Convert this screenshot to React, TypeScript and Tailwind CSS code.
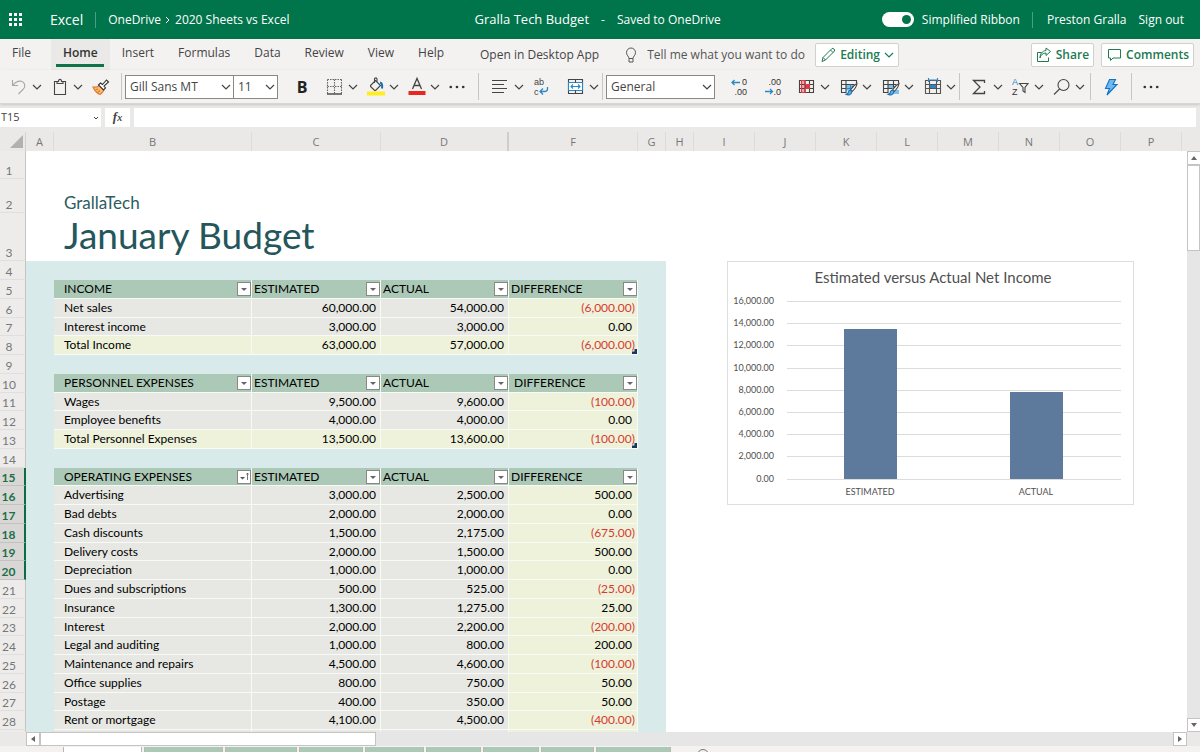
import type { ReactNode } from 'react';
import clsx from 'clsx';

const UI_FONT = "font-['Open_Sans','Noto_Sans',sans-serif]";
const SHEET_FONT = "font-['Lato','Open_Sans',sans-serif]";

type SheetRow =
  | { kind: 'blank' }
  | { kind: 'header'; cells: string[]; sorted?: boolean; indent?: boolean }
  | { kind: 'data' | 'total'; cells: string[]; corner?: boolean };

const ROWS: SheetRow[] = [
  { kind: 'blank' },
  { kind: 'header', cells: ['INCOME', 'ESTIMATED', 'ACTUAL', 'DIFFERENCE'] },
  { kind: 'data', cells: ['Net sales', '60,000.00', '54,000.00', '(6,000.00)'] },
  { kind: 'data', cells: ['Interest income', '3,000.00', '3,000.00', '0.00'] },
  { kind: 'total', cells: ['Total Income', '63,000.00', '57,000.00', '(6,000.00)'], corner: true },
  { kind: 'blank' },
  { kind: 'header', cells: ['PERSONNEL EXPENSES', 'ESTIMATED', 'ACTUAL', 'DIFFERENCE'], indent: true },
  { kind: 'data', cells: ['Wages', '9,500.00', '9,600.00', '(100.00)'] },
  { kind: 'data', cells: ['Employee benefits', '4,000.00', '4,000.00', '0.00'] },
  { kind: 'total', cells: ['Total Personnel Expenses', '13,500.00', '13,600.00', '(100.00)'], corner: true },
  { kind: 'blank' },
  { kind: 'header', cells: ['OPERATING EXPENSES', 'ESTIMATED', 'ACTUAL', 'DIFFERENCE'], sorted: true },
  { kind: 'data', cells: ['Advertising', '3,000.00', '2,500.00', '500.00'] },
  { kind: 'data', cells: ['Bad debts', '2,000.00', '2,000.00', '0.00'] },
  { kind: 'data', cells: ['Cash discounts', '1,500.00', '2,175.00', '(675.00)'] },
  { kind: 'data', cells: ['Delivery costs', '2,000.00', '1,500.00', '500.00'] },
  { kind: 'data', cells: ['Depreciation', '1,000.00', '1,000.00', '0.00'] },
  { kind: 'data', cells: ['Dues and subscriptions', '500.00', '525.00', '(25.00)'] },
  { kind: 'data', cells: ['Insurance', '1,300.00', '1,275.00', '25.00'] },
  { kind: 'data', cells: ['Interest', '2,000.00', '2,200.00', '(200.00)'] },
  { kind: 'data', cells: ['Legal and auditing', '1,000.00', '800.00', '200.00'] },
  { kind: 'data', cells: ['Maintenance and repairs', '4,500.00', '4,600.00', '(100.00)'] },
  { kind: 'data', cells: ['Office supplies', '800.00', '750.00', '50.00'] },
  { kind: 'data', cells: ['Postage', '400.00', '350.00', '50.00'] },
  { kind: 'data', cells: ['Rent or mortgage', '4,100.00', '4,500.00', '(400.00)'] },
  { kind: 'data', cells: ['', '', '', ''] },
];

const COLUMNS = [
  { name: 'A', width: 'w-[28px]' },
  { name: 'B', width: 'w-[198px]' },
  { name: 'C', width: 'w-[129px]' },
  { name: 'D', width: 'w-[128px]' },
  { name: 'F', width: 'w-[129px]' },
  { name: 'G', width: 'w-[28px]' },
  { name: 'H', width: 'w-[28px]' },
  { name: 'I', width: 'w-[61px]' },
  { name: 'J', width: 'w-[61px]' },
  { name: 'K', width: 'w-[61px]' },
  { name: 'L', width: 'w-[61px]' },
  { name: 'M', width: 'w-[61px]' },
  { name: 'N', width: 'w-[61px]' },
  { name: 'O', width: 'w-[61px]' },
  { name: 'P', width: 'w-[61px]' },
];

const MENU = ['File', 'Home', 'Insert', 'Formulas', 'Data', 'Review', 'View', 'Help'];

/* ---------- icons ---------- */

function Svg({ children, className = 'w-[18px] h-[18px]' }: { children: ReactNode; className?: string }) {
  return (
    <svg viewBox="0 0 18 18" className={clsx('shrink-0 overflow-visible', className)} fill="none" stroke="#444" strokeWidth="1.1">
      {children}
    </svg>
  );
}

function Chevron({ className = 'text-[#444]' }: { className?: string }) {
  return (
    <svg viewBox="0 0 10 10" className={clsx('w-2.5 h-2.5 shrink-0 pointer-events-none', className)} fill="none" stroke="currentColor" strokeWidth="1.2">
      <path d="M1 3l4 4 4-4" />
    </svg>
  );
}

const UndoIcon = () => (
  <Svg>
    <path d="M2.500 2v5.500H8M2.500 7.500c3-3.500 6-5 9-4.200s4.500 4.500 2 7.700L8.500 16" stroke="#a8a6a4" />
  </Svg>
);

const PasteIcon = () => (
  <Svg>
    <path d="M6 3.500H3.500v13h11v-13H12M6 5.500v-2h1.500c0-3 3-3 3 0H12v2z" />
  </Svg>
);

const BrushIcon = () => (
  <Svg>
    <path d="M1 9c3 .5 5-.3 6.500-1.500l4.500 4.500c-1 2-2.500 3.500-4 4.500-3-1-5.500-4-7-7.500z" fill="#f9b97a" stroke="#e07b1f" />
    <path d="M3.500 12l2.500-1M5.500 14.500l2.500-2" stroke="#e07b1f" />
    <path d="M6.500 7l2-2 2 1.500 4-4.500 2 2L12 8l1.500 2-2 2z" fill="#fff" stroke="#333" />
  </Svg>
);

const BordersIcon = () => (
  <Svg>
    <path d="M1.500 1.500h14M1.500 1.500v14M15.500 1.500v14M8.500 1.500v14M1.500 8.500h14" strokeDasharray="1.500 1" stroke="#666" />
    <path d="M1 16h15" strokeWidth="1.400" />
  </Svg>
);

const FillIcon = () => (
  <Svg>
    <rect x="0" y="13.500" width="18" height="4" fill="#ffee1f" stroke="none" />
    <path d="M3.500 7.500l5-5 5 5-4.500 4.500c-.6.500-1.200.500-1.800 0L3.500 8.500zM7.500 5V1c0-1.500 2.500-1.500 2.500 0v4" />
    <path d="M13 4.500c2 .5 2.500 3 2 6" stroke="#1271b5" strokeWidth="2" />
  </Svg>
);

const FontColorIcon = () => (
  <Svg>
    <path d="M4.500 11L9 .500 13.500 11M6 7.500h6" strokeWidth="1.300" />
    <rect x="0.500" y="13" width="17" height="4" fill="#e8281e" stroke="none" />
  </Svg>
);

const MoreIcon = () => (
  <Svg className="w-4 h-4">
    <g fill="#333" stroke="none">
      <circle cx="2" cy="9" r="1.500" />
      <circle cx="9" cy="9" r="1.500" />
      <circle cx="16" cy="9" r="1.500" />
    </g>
  </Svg>
);

const AlignIcon = () => (
  <Svg>
    <path d="M0 2.500h15M0 6.500h12M0 10.500h15M0 14.500h12" />
  </Svg>
);

const WrapIcon = () => (
  <Svg>
    <g fill="#444" stroke="none" fontSize="9" fontFamily="Liberation Sans">
      <text x="1" y="7">ab</text>
      <text x="1" y="17">c</text>
    </g>
    <path d="M14.500 9v2c0 2-1 2.500-3 2.500H7.500M10 10.500l-3 3 3 3" stroke="#2b88c4" strokeWidth="1.300" />
  </Svg>
);

const MergeIcon = () => (
  <Svg>
    <path d="M1.500 1.500h14v14h-14z" />
    <path d="M1.500 4.500h14v8h-14z" stroke="#2b88c4" fill="#fff" />
    <path d="M8.500 1.500v3M8.500 12.500v3" />
    <path d="M4 8.500h9M6 6.500l-2 2 2 2M11 6.500l2 2-2 2" stroke="#2b88c4" />
  </Svg>
);

function DecimalIcon({ top, bottom, left }: { top: string; bottom: string; left?: boolean }) {
  return (
    <Svg>
      <g fill="#333" stroke="none" fontSize="9" fontFamily="Liberation Sans" textAnchor="end">
        <text x="17" y="7">{top}</text>
        <text x="17" y="17">{bottom}</text>
      </g>
      {left
        ? <path d="M10 4.500H2M4.500 2L2 4.500 4.500 7" stroke="#2b88c4" strokeWidth="1.300" />
        : <path d="M1 13.500h7.500M6 11l2.500 2.500L6 16" stroke="#2b88c4" strokeWidth="1.300" />}
    </Svg>
  );
}

const ConditionalIcon = () => (
  <Svg>
    <path d="M3.500 2.500h4v4h4v4h-4v4h-4z" fill="#f5a3a8" stroke="none" />
    <path d="M7 6.500h4.500v4H7z" fill="#e03a45" stroke="none" />
    <path d="M1.500 2.500h14v12h-14zM1.500 6.500h14M1.500 10.500h14M7 2.500v12M11.500 2.500v12" />
    <path d="M3.500 2.500H7v4h4.500v4H7v4H3.500z" stroke="#e03a45" />
  </Svg>
);

const BrushOverlay = () => (
  <>
    <path d="M17 5.500c-2 1-5 4-6.500 6.500l1.500 1.500c2.500-2 4.500-5 5-8z" fill="#fff" />
    <path d="M10.500 12c-2 0-2 1.500-2.500 3-.3.800-1 1-2 1.200 2 1.300 5.500.8 6-2.700z" fill="#5bb0e6" stroke="#1f6fae" />
  </>
);

const TableFormatIcon = () => (
  <Svg>
    <path d="M6 6.500h7v6H6z" fill="#7cc0ee" stroke="none" />
    <path d="M16.500 5V2.500h-15v12h5M1.500 6.500h13M1.500 10.500h4M6 2.500v12" />
    <path d="M6 10.500h5M10.500 6.500v5" stroke="#2b88c4" />
    <BrushOverlay />
  </Svg>
);

const CellStyleIcon = () => (
  <Svg>
    <path d="M6 6.500h6v4H6zM13 12h4v4h-6z" fill="#7cc0ee" stroke="none" />
    <path d="M16.500 5V2.500h-15v12h5M1.500 6.500h13M1.500 10.500h9M6 2.500v12M11.500 2.500v7" />
    <BrushOverlay />
  </Svg>
);

const InsertCellsIcon = () => (
  <Svg>
    <path d="M6 6.500h6v4H6z" fill="#2b88c4" stroke="none" />
    <path d="M1.500 2.500h15v13h-15zM1.500 6.500h15M1.500 10.500h15M5.500 2.500v13M12.500 2.500v13" stroke="#555" />
    <path d="M4.500 0v4M5 2h8M13.500 0v4" stroke="#2b88c4" />
  </Svg>
);

const SumIcon = () => (
  <Svg>
    <path d="M13.500 5V2.500h-11L9 9l-6.500 6.500h11V13" strokeWidth="1.300" />
  </Svg>
);

const SortIcon = () => (
  <Svg>
    <g stroke="none" fontSize="9" fontFamily="Liberation Sans">
      <text x="0" y="7" fill="#2b88c4">A</text>
      <text x="0" y="17" fill="#333">Z</text>
    </g>
    <path d="M7.500 5.500h8.500L13 9.500v5l-2-1.500V9.500z" />
  </Svg>
);

const FindIcon = () => (
  <Svg>
    <circle cx="10.500" cy="7" r="5.500" />
    <path d="M6.500 11L1 16.500" />
  </Svg>
);

const BoltIcon = () => (
  <Svg>
    <path d="M7.500 1.500h6L11 6.500h4L5 17l2.500-6.500H3.500z" fill="#6db8f0" stroke="#1272c4" />
  </Svg>
);

/* ---------- ribbon ---------- */

function Tool({ label, icon, menu }: { label: string; icon: ReactNode; menu?: boolean }) {
  return (
    <button aria-label={label} className="flex items-center gap-1 h-7 shrink-0">
      {icon}
      {menu && <Chevron />}
    </button>
  );
}

const Divider = ({ className }: { className: string }) => (
  <span className={clsx('w-px h-[27px] bg-[#c8c6c4] shrink-0', className)} />
);

function Combo({ label, value, className }: { label: string; value: string; className: string }) {
  return (
    <label className={clsx('relative flex items-center h-6 border border-[#8a8886] bg-white shrink-0', className)}>
      <select aria-label={label} className="appearance-none w-full h-full pl-1 text-[12px] text-[#444] bg-transparent outline-none">
        <option>{value}</option>
      </select>
      <Chevron className="absolute right-[2px] text-[#444]" />
    </label>
  );
}

function TopBar() {
  return (
    <header className="flex items-center h-[39px] bg-[#00744a] text-white text-[12px] font-medium shrink-0">
      <button aria-label="App launcher" className="ml-[9px] grid grid-cols-3 gap-[2px]">
        {Array.from({ length: 9 }, (_, i) => <span key={i} className="w-[3px] h-[3px] bg-white" />)}
      </button>
      <span className="ml-7 text-[14px]">Excel</span>
      <span className="ml-3 w-px h-4 bg-[#4d9d80]" />
      <nav className="ml-3 flex items-center gap-[3px]">
        <a href="#onedrive">OneDrive</a>
        <svg viewBox="0 0 8 8" className="w-2 h-2" fill="none" stroke="white"><path d="M2 1l3 3-3 3" /></svg>
        <a href="#folder">2020 Sheets vs Excel</a>
      </nav>
      <div className="flex-1 flex items-center justify-center pl-6">
        <span className="text-[13px]">Gralla Tech Budget</span>
        <span className="mx-3">-</span>
        <span>Saved to OneDrive</span>
      </div>
      <button role="switch" aria-checked="true" aria-labelledby="ribbon-switch" className="flex justify-end items-center w-8 h-[15px] rounded-full bg-white pr-[3px]">
        <span className="w-[9px] h-[9px] rounded-full bg-[#00744a]" />
      </button>
      <span id="ribbon-switch" className="ml-2">Simplified Ribbon</span>
      <span className="ml-3 w-px h-4 bg-[#4d9d80]" />
      <button className="ml-3.5">Preston Gralla</button>
      <a href="#signout" className="ml-3 mr-4">Sign out</a>
    </header>
  );
}

const PILL = 'flex items-center gap-1 h-6 px-1 border border-[#d2d0ce] rounded-xs bg-white font-semibold text-[#217a50]';

function MenuRow() {
  return (
    <div className="flex items-center h-[31px] text-[12px] text-[#444] shrink-0">
      <nav className="flex self-stretch">
        {MENU.map(item => (
          <button
            key={item}
            className={clsx(
              'flex flex-col items-center px-3 pt-[5px]',
              item === 'Home' ? 'ml-2 bg-[#eae9e8] font-semibold text-[#333]' : 'font-normal',
            )}
          >
            {item}
            {item === 'Home' && <span className="-mx-2 mt-[2px] w-12 h-[3px] bg-[#0f7348]" />}
          </button>
        ))}
      </nav>
      <button className="ml-6">Open in Desktop App</button>
      <label className="ml-6 flex items-center gap-2">
        <svg viewBox="0 0 16 16" className="w-4 h-4" fill="none" stroke="#555">
          <path d="M6 11.500c0-2-2.500-3-2.500-6a4.500 4.500 0 0 1 9 0c0 3-2.500 4-2.500 6zM6 11.500v3.500h4v-3.500" />
        </svg>
        <input placeholder="Tell me what you want to do" className="w-[160px] bg-transparent outline-none placeholder:text-[#555]" />
      </label>
      <button className={clsx('ml-2', PILL)}>
        <svg viewBox="0 0 16 16" className="w-4 h-4" fill="none" stroke="currentColor">
          <path d="M2 14.500l1-4L12 1.500c1-.8 3.300 1.300 2.500 2.500l-9 9zM3 10.500l2.500 2.500M10.500 3l2.500 2.500" />
        </svg>
        Editing
        <Chevron className="text-[#217a50]" />
      </button>
      <div className="ml-auto mr-1.5 flex gap-[7px]">
        <button className={PILL}>
          <svg viewBox="0 0 16 16" className="w-4 h-4" fill="none" stroke="currentColor">
            <path d="M5.500 5.500h-4v9h11v-4M4 11c.5-3 3-5 6-5V8.500l4.500-4L10 1v2.500C6 4 4 7 4 11z" />
          </svg>
          Share
        </button>
        <button className={PILL}>
          <svg viewBox="0 0 16 16" className="w-4 h-4" fill="none" stroke="currentColor">
            <path d="M2.500 2.500h12v8.500H7l-2.500 2.500V11h-2z" />
          </svg>
          Comments
        </button>
      </div>
    </div>
  );
}

function Toolbar() {
  return (
    <div className="flex items-center h-[34px] gap-[9px] pl-2.5 border-b border-[#d8d6d4] shadow-sm shrink-0 relative">
      <Tool label="Undo" icon={<UndoIcon />} menu />
      <Tool label="Paste" icon={<PasteIcon />} menu />
      <Tool label="Format painter" icon={<BrushIcon />} />
      <Divider className="ml-0.5 -mr-1.5" />
      <div className="flex shrink-0">
        <Combo label="Font" value="Gill Sans MT" className="w-[109px]" />
        <Combo label="Font size" value="11" className="w-[45px] -ml-px" />
      </div>
      <button aria-label="Bold" className="mx-1.5 w-[18px] text-[16px] leading-5 font-bold text-[#222]">B</button>
      <Tool label="Borders" icon={<BordersIcon />} menu />
      <Tool label="Fill color" icon={<FillIcon />} menu />
      <Tool label="Font color" icon={<FontColorIcon />} menu />
      <Tool label="More font options" icon={<MoreIcon />} />
      <Divider className="mx-1" />
      <Tool label="Alignment" icon={<AlignIcon />} menu />
      <div className="flex gap-4">
        <Tool label="Wrap text" icon={<WrapIcon />} />
        <Tool label="Merge" icon={<MergeIcon />} menu />
      </div>
      <Divider className="-mx-1.5" />
      <Combo label="Number format" value="General" className="w-[109px]" />
      <div className="flex gap-4 ml-1.5">
        <Tool label="Increase decimal" icon={<DecimalIcon top="0" bottom=".00" left />} />
        <Tool label="Decrease decimal" icon={<DecimalIcon top=".00" bottom=".0" />} />
        <div className="flex gap-2.5">
          <Tool label="Conditional formatting" icon={<ConditionalIcon />} menu />
          <Tool label="Format as table" icon={<TableFormatIcon />} menu />
          <Tool label="Cell styles" icon={<CellStyleIcon />} menu />
          <Tool label="Insert cells" icon={<InsertCellsIcon />} menu />
        </div>
      </div>
      <Divider className="-ml-1.5 mr-0.5" />
      <Tool label="AutoSum" icon={<SumIcon />} menu />
      <Tool label="Sort and filter" icon={<SortIcon />} menu />
      <Tool label="Find" icon={<FindIcon />} menu />
      <Divider className="-ml-1 mr-0.5" />
      <Tool label="Ideas" icon={<BoltIcon />} />
      <Divider className="mx-0.5" />
      <Tool label="More commands" icon={<MoreIcon />} />
    </div>
  );
}

function FormulaBar() {
  return (
    <div className="flex gap-1 mt-1 h-[19px] pr-1 shrink-0">
      <label className="relative flex items-center w-[101px] bg-white">
        <input aria-label="Name box" defaultValue="T15" className="w-full pl-px text-[11px] text-[#444] outline-none bg-transparent" />
        <svg viewBox="0 0 6 6" className="absolute right-[2px] w-1.5 h-1.5" fill="none" stroke="#444"><path d="M1 2l2 2 2-2" /></svg>
      </label>
      <button aria-label="Insert function" className="w-[25px] bg-white font-['Liberation_Serif',serif] italic font-bold text-[13px] leading-4 text-[#444]">
        f<span className="text-[10px]">x</span>
      </button>
      <input aria-label="Formula" className="flex-1 bg-white outline-none px-1 text-[12px]" />
    </div>
  );
}

/* ---------- sheet ---------- */

function FilterButton({ label, sorted }: { label: string; sorted?: boolean }) {
  return (
    <button aria-label={`Filter ${label}`} className="w-[14px] h-[14px] bg-white border border-[#8a8886] shrink-0">
      <svg viewBox="0 0 12 12" className="w-3 h-3">
        {sorted ? (
          <>
            <path d="M2 6h5L4.500 8.500z" fill="#555" />
            <path d="M9.500 9V2M8.500 3.500l1-1.500 1 1.500" stroke="#555" fill="none" strokeWidth="0.800" />
          </>
        ) : (
          <path d="M3 5h6L6 8z" fill="#666" />
        )}
      </svg>
    </button>
  );
}

function RowHead({ n, selected, last }: { n: number; selected?: boolean; last?: boolean }) {
  return (
    <th
      scope="row"
      className={clsx(
        'align-bottom text-[12px] leading-[14px] text-center pr-[7px]',
        selected
          ? 'bg-[#d9d7d5] font-bold text-[#1c7048] border-b border-b-[#c4c2c0] border-r-2 border-r-[#0f6b41]'
          : 'bg-[#edeceb] font-normal text-[#777] border-b border-b-[#e1dfdd] border-r border-r-[#c6c4c2]',
      )}
    >
      {!last && n}
    </th>
  );
}

const BAND = 'bg-[#d9eaea]';
const CELL_EDGE = 'border-r border-b border-[#f8faf6]';

function SheetCells({ row }: { row: SheetRow }) {
  if (row.kind === 'blank') {
    return <td colSpan={6} className={BAND} />;
  }
  if (row.kind === 'header') {
    return (
      <>
        <td className={BAND} />
        {row.cells.map((text, i) => (
          <th key={i} scope="col" className={clsx('bg-[#acc8b6] font-normal', CELL_EDGE, i === 0 ? 'pl-[10px]' : 'pl-[2px]')}>
            <div className="flex items-center justify-between h-[17px] leading-4">
              <span className={clsx(row.indent && i === 3 && 'pl-[3px]')}>{text}</span>
              <FilterButton label={text} sorted={row.sorted && i === 0} />
            </div>
          </th>
        ))}
        <td className={BAND} />
      </>
    );
  }
  return (
    <>
      <td className={BAND} />
      {row.cells.map((text, i) => {
        const negative = text.startsWith('(');
        return (
          <td
            key={i}
            className={clsx(
              'leading-4 relative',
              CELL_EDGE,
              row.kind === 'total' || i === 3 ? 'bg-[#eef2db]' : 'bg-[#e7e8e3]',
              i === 0 ? 'pl-[10px]' : 'text-right',
              (i === 1 || i === 2) && 'pr-1',
              i === 3 && (negative ? 'pr-[2px] text-[#d63a2f]' : 'pr-[5px]'),
            )}
          >
            {text}
            {row.corner && i === 3 && (
              <svg viewBox="0 0 5 5" className="absolute right-0 bottom-0 w-[5px] h-[5px]"><path d="M5 0v5H0V2.500h2.500V0z" fill="#17375e" /></svg>
            )}
          </td>
        );
      })}
      <td className={BAND} />
    </>
  );
}

function Sheet() {
  return (
    <table className={clsx('w-full table-fixed border-separate border-spacing-0 text-[12px] text-black text-left', SHEET_FONT)}>
      <colgroup>
        <col className="w-[26px]" />
        {COLUMNS.map(c => <col key={c.name} className={c.width} />)}
        <col />
      </colgroup>
      <thead className={clsx('bg-[#eae9e8] text-[11px] text-[#777]', UI_FONT)}>
        <tr className="h-[19px]">
          <th aria-label="Select all" className="border-r border-[#d4d2d0]">
            <svg viewBox="0 0 13 13" className="w-[13px] h-[13px] ml-[10px]"><path d="M13 0v13H0z" fill="#b3b0ad" /></svg>
          </th>
          {COLUMNS.map(c => (
            <th
              key={c.name}
              scope="col"
              className={clsx('font-normal text-center leading-4 pt-px', c.name === 'D' ? 'border-r-2 border-[#d0cecc]' : 'border-r border-[#dddbd9]')}
            >
              {c.name}
            </th>
          ))}
          <th />
        </tr>
      </thead>
      <tbody>
        <tr className="h-7">
          <RowHead n={1} />
          <td colSpan={16} />
        </tr>
        <tr className="h-[34px] text-[#2b5c63]">
          <RowHead n={2} />
          <td />
          <td colSpan={15} className="pl-[10px] align-bottom text-[17px] leading-5">GrallaTech</td>
        </tr>
        <tr className="h-12 text-[#24565c]">
          <RowHead n={3} />
          <td />
          <td colSpan={15} className="pl-[10px] align-top text-[37px] leading-[44px]">January Budget</td>
        </tr>
        {ROWS.map((row, i) => {
          const n = i + 4;
          return (
            <tr key={n} className={i % 4 === 3 ? 'h-[18px]' : 'h-[19px]'}>
              <RowHead n={n} selected={n >= 15 && n <= 20} last={n === 29} />
              <SheetCells row={row} />
              <td colSpan={10} />
            </tr>
          );
        })}
      </tbody>
    </table>
  );
}

const TICKS = ['16,000.00', '14,000.00', '12,000.00', '10,000.00', '8,000.00', '6,000.00', '4,000.00', '2,000.00', '0.00'];
const BARS = [
  { label: 'ESTIMATED', x: 143, top: 68 },
  { label: 'ACTUAL', x: 309, top: 131 },
];

function NetIncomeChart() {
  return (
    <svg viewBox="0 0 407 244" className={clsx('w-[407px] h-[244px] bg-white', SHEET_FONT)} role="img" aria-label="Estimated versus Actual Net Income">
      <rect x="0.500" y="0.500" width="406" height="243" fill="none" stroke="#dedede" />
      <text x="206" y="22" textAnchor="middle" fontSize="15" fill="#505050">Estimated versus Actual Net Income</text>
      {TICKS.map((t, i) => {
        const y = 40 + Math.round(i * 22.2);
        return (
          <g key={t}>
            <line x1="60" x2="394" y1={y + 0.5} y2={y + 0.5} stroke="#dcdcdc" />
            <text x="47" y={y + 3} textAnchor="end" fontSize="9" fill="#505050">{t}</text>
          </g>
        );
      })}
      {BARS.map(b => (
        <g key={b.label}>
          <rect x={b.x - 26} y={b.top} width="53" height={218 - b.top} fill="#5d7a9c" />
          <text x={b.x} y="234" textAnchor="middle" fontSize="9" fill="#505050">{b.label}</text>
        </g>
      ))}
    </svg>
  );
}

function ScrollArrow({ label, d, className }: { label: string; d: string; className?: string }) {
  return (
    <button aria-label={label} className={clsx('w-[14px] h-[14px] bg-white border border-[#c6c4c2] shrink-0 flex items-center justify-center', className)}>
      <svg viewBox="0 0 6 6" className="w-1.5 h-1.5"><path d={d} fill="#666" /></svg>
    </button>
  );
}

const SHEET_TABS = ['w-[79px]', 'w-[79px]', 'w-[72px]', 'w-[64px]', 'w-[59px]', 'w-[55px]', 'w-[56px]', 'w-[53px]', 'w-[75px]'];

export default function App() {
  return (
    <div className={clsx('h-screen flex flex-col overflow-hidden bg-[#f3f2f1]', UI_FONT)}>
      <TopBar />
      <MenuRow />
      <Toolbar />
      <div className="flex-1 min-h-0 flex flex-col bg-[#eae9e8]">
        <FormulaBar />
        <main className="flex-1 min-h-0 flex mt-[5px]">
          <div className="relative flex-1 min-w-0 overflow-hidden bg-white">
            <Sheet />
            <div className="absolute left-[727px] top-[129px]">
              <NetIncomeChart />
            </div>
          </div>
          <div className="w-[13px] flex flex-col bg-[#e6e6e6]">
            <div className="h-[19px] bg-[#eae9e8]" />
            <ScrollArrow label="Scroll up" d="M0 5l3-4 3 4z" />
            <div className="h-[86px] bg-white border border-[#c6c4c2]" />
            <ScrollArrow label="Scroll down" d="M0 1l3 4 3-4z" className="mt-auto" />
          </div>
        </main>
      </div>
      <div className="flex h-[14px] pl-[26px] pr-[13px] bg-[#eae9e8] shrink-0">
        <ScrollArrow label="Scroll left" d="M5 0L1 3l4 3z" />
        <div className="w-[336px] bg-white border border-[#c6c4c2]" />
        <div className="flex-1 bg-[#e6e6e6]" />
        <ScrollArrow label="Scroll right" d="M1 0l4 3-4 3z" />
      </div>
      <div className="flex items-start h-1.5 pl-[63px] pt-px gap-[2px] overflow-hidden shrink-0">
        {SHEET_TABS.map((w, i) => (
          <button
            key={i}
            aria-label={`Sheet ${i + 1}`}
            className={clsx('h-5 shrink-0 border-x border-[#b9b7b5]', w, i === 0 ? 'bg-white' : 'bg-[#acc8b6]')}
          />
        ))}
        <button aria-label="New sheet" className="ml-6 mt-0.5">
          <svg viewBox="0 0 12 12" className="w-3 h-3" fill="none" stroke="#777"><circle cx="6" cy="6" r="5.500" /><path d="M6 3v6M3 6h6" /></svg>
        </button>
      </div>
    </div>
  );
}
